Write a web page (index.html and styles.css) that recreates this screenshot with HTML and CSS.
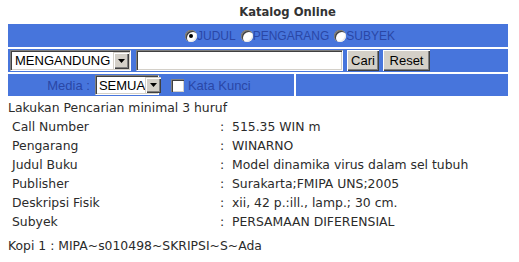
FILE: index.html
```html
<!DOCTYPE html>
<html lang="id">
<head>
  <meta charset="UTF-8" />
  <title>Katalog Online</title>
  <link rel="stylesheet" href="styles.css">
</head>
<body>
<div class="page">
  <h1 class="title">Katalog Online</h1>

  <form class="search" onsubmit="return false;">
    <div class="bar bar-mode">
      <label class="opt"><input type="radio" name="mode" value="judul" checked />JUDUL</label>
      <label class="opt"><input type="radio" name="mode" value="pengarang" />PENGARANG</label>
      <label class="opt"><input type="radio" name="mode" value="subyek" />SUBYEK</label>
    </div>

    <div class="bar bar-query">
      <div class="select select-match">
        <span class="select-text">MENGANDUNG</span>
        <span class="select-btn"><svg width="7" height="4" viewBox="0 0 7 4"><path d="M0 0h7L3.5 4z" fill="#000"/></svg></span>
      </div>
      <input class="query" type="text" />
      <button class="btn btn-cari" type="submit">Cari</button>
      <button class="btn btn-reset" type="reset">Reset</button>
    </div>

    <div class="bar-split">
      <div class="bar bar-media">
        <span class="media-label">Media :</span>
        <div class="select select-media">
          <span class="select-text">SEMUA</span>
          <span class="select-btn"><svg width="7" height="4" viewBox="0 0 7 4"><path d="M0 0h7L3.5 4z" fill="#000"/></svg></span>
        </div>
        <label class="opt opt-check"><input type="checkbox" />Kata Kunci</label>
      </div>
      <div class="bar bar-empty"></div>
    </div>
  </form>

  <p class="hint">Lakukan Pencarian minimal 3 huruf</p>

  <div class="detail">
    <span class="key">Call Number</span><span class="sep">:</span><span class="val">515.35 WIN m</span>
    <span class="key">Pengarang</span><span class="sep">:</span><span class="val">WINARNO</span>
    <span class="key">Judul Buku</span><span class="sep">:</span><span class="val">Model dinamika virus dalam sel tubuh</span>
    <span class="key">Publisher</span><span class="sep">:</span><span class="val">Surakarta;FMIPA UNS;2005</span>
    <span class="key">Deskripsi Fisik</span><span class="sep">:</span><span class="val">xii, 42 p.:ill., lamp.; 30 cm.</span>
    <span class="key">Subyek</span><span class="sep">:</span><span class="val">PERSAMAAN DIFERENSIAL</span>
  </div>

  <p class="copy">Kopi 1 : MIPA~s010498~SKRIPSI~S~Ada</p>
</div>
</body>
</html>
```

FILE: styles.css
```css
body {
  margin: 0;
  background: #fff;
  font-family: 'DejaVu Sans', Verdana, sans-serif;
  font-size: 12.4px;
  color: #2b2b2b;
}

.page {
  width: 500px;
  margin: 0 8px;
}

.title {
  margin: 0;
  height: 24px;
  padding: 1px 0 0 59px;
  box-sizing: border-box;
  line-height: 23px;
  font-size: 11.6px;
  font-weight: bold;
  text-align: center;
  color: #333;
}

.search {
  margin: 0;
  display: flex;
  flex-direction: column;
  gap: 2px;
}

.bar {
  background: #4775dc;
  box-sizing: border-box;
  font-family: 'Liberation Sans', Arial, sans-serif;
  color: #2a47a6;
}

.bar-mode {
  height: 23px;
  display: flex;
  align-items: center;
  justify-content: center;
  gap: 5px;
  padding-left: 64px;
  font-size: 12px;
}

.opt {
  display: flex;
  align-items: center;
}

.opt input {
  -webkit-appearance: none;
  appearance: none;
  margin: 0;
  width: 12px;
  height: 12px;
  background: #fff;
  position: relative;
}

.opt input[type="radio"] {
  border-radius: 50%;
  box-shadow: inset 1px 1px 0 #808080, inset 2px 2px 0 #404040, inset -1px -1px 0 #e8e8e8;
}

.opt input[type="radio"]:checked::after {
  content: "";
  position: absolute;
  left: 4px;
  top: 4px;
  width: 4px;
  height: 4px;
  border-radius: 50%;
  background: #000;
}

.bar-query {
  height: 23px;
  display: flex;
  align-items: center;
  padding: 0 2px;
}

.select {
  display: flex;
  align-items: center;
  box-sizing: border-box;
  background: #fff;
  border: 1px solid;
  border-color: #808080 #fff #fff #808080;
  box-shadow: inset 1px 1px 0 #404040, inset -1px -1px 0 #d4d0c8;
  padding: 1px;
  font-family: 'Liberation Sans', Arial, sans-serif;
  font-size: 13px;
  color: #000;
}

.select-text {
  flex: 1;
  padding-left: 3px;
  white-space: nowrap;
}

.select-btn {
  width: 16px;
  flex-shrink: 0;
  align-self: stretch;
  display: flex;
  align-items: center;
  justify-content: center;
  background: #d4d0c8;
  box-shadow: inset 1px 1px 0 #d4d0c8, inset 2px 2px 0 #fff, inset -1px -1px 0 #404040, inset -2px -2px 0 #808080;
}

.select-match {
  width: 121px;
  height: 21px;
}

.query {
  width: 207px;
  height: 21px;
  margin: 0 4px 0 5px;
  box-sizing: border-box;
  border: 1px solid;
  border-color: #808080 #fff #fff #808080;
  box-shadow: inset 1px 1px 0 #404040, inset -1px -1px 0 #d4d0c8;
  background: #fff;
  outline: none;
}

.btn {
  height: 21px;
  padding: 0;
  margin-right: 4px;
  box-sizing: border-box;
  background: #d4d0c8;
  border: none;
  box-shadow: inset 1px 1px 0 #fff, inset -1px -1px 0 #404040, inset -2px -2px 0 #808080;
  font-family: 'Liberation Sans', Arial, sans-serif;
  font-size: 13px;
  color: #000;
}

.btn-cari {
  width: 32px;
}

.btn-reset {
  width: 47px;
}

.bar-split {
  display: flex;
  gap: 2px;
}

.bar-media {
  width: 286px;
  height: 22px;
  display: flex;
  align-items: center;
  justify-content: center;
  padding-right: 4px;
  font-size: 13px;
}

.bar-empty {
  flex: 1;
  height: 22px;
}

.media-label {
  margin-right: 5px;
}

.select-media {
  width: 64px;
  height: 20px;
}

.select-media .select-text {
  padding-left: 2px;
}

.opt-check {
  margin-left: 12px;
}

.opt-check input {
  width: 13px;
  height: 13px;
  margin-right: 4px;
  box-shadow: inset 1px 1px 0 #808080, inset 2px 2px 0 #404040, inset -1px -1px 0 #d4d0c8;
}

.hint {
  margin: 2px 0 0;
  padding-left: 0;
  line-height: 19px;
}

.detail {
  display: grid;
  grid-template-columns: 208px 12px auto;
  padding-left: 4px;
  line-height: 19px;
}

.copy {
  margin: 5px 0 0;
  line-height: 19px;
}
```
